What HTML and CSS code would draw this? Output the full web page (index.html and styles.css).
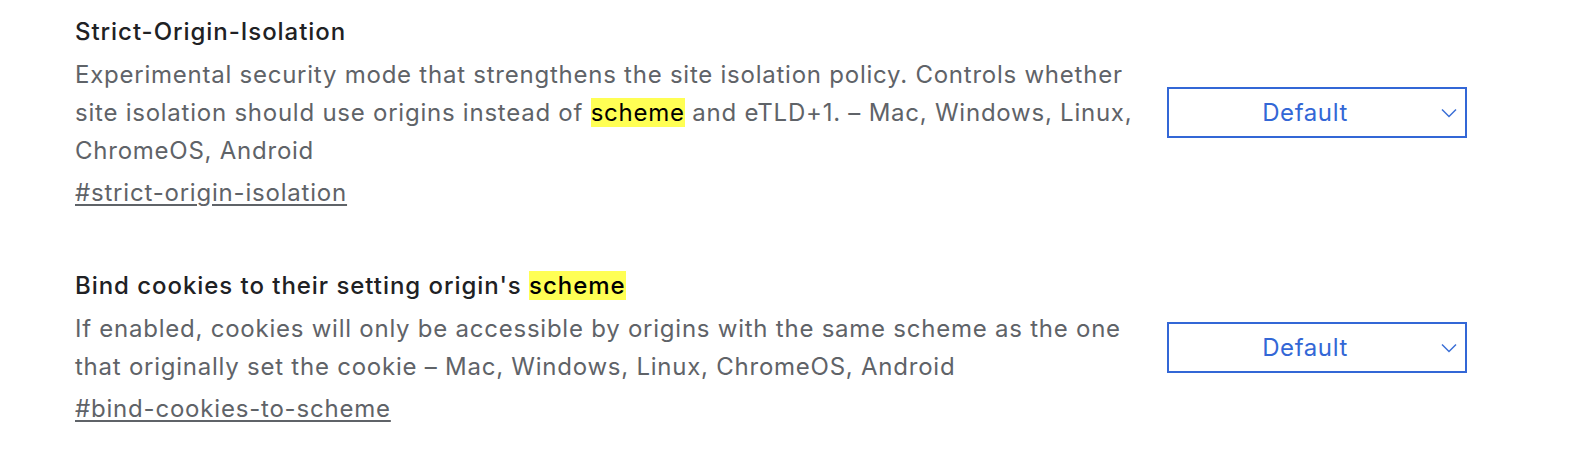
FILE: index.html
```html
<!DOCTYPE html>
<html lang="en">
<head>
<meta charset="utf-8">
<title>Experiments</title>
<link rel="stylesheet" href="styles.css">
</head>
<body>
<div class="flags">
  <div class="experiment">
    <div class="info">
      <h3 class="name">Strict-Origin-Isolation</h3>
      <p class="desc">Experimental security mode that strengthens the site isolation policy. Controls whether site isolation should use origins instead of <span class="hl">scheme</span> and eTLD+1. – Mac, Windows, Linux, ChromeOS, Android</p>
      <p class="permalink"><a href="#strict-origin-isolation">#strict-origin-isolation</a></p>
    </div>
    <div class="select"><span class="select-label">Default</span><svg class="chev" width="16" height="10" viewBox="0 0 16 10"><path d="M1 1.5 L8 8.5 L15 1.5" fill="none" stroke="#3b6fd6" stroke-width="1.5"/></svg></div>
  </div>
  <div class="experiment">
    <div class="info">
      <h3 class="name">Bind cookies to their setting origin's <span class="hl">scheme</span></h3>
      <p class="desc">If enabled, cookies will only be accessible by origins with the same scheme as the one that originally set the cookie – Mac, Windows, Linux, ChromeOS, Android</p>
      <p class="permalink"><a href="#bind-cookies-to-scheme">#bind-cookies-to-scheme</a></p>
    </div>
    <div class="select"><span class="select-label">Default</span><svg class="chev" width="16" height="10" viewBox="0 0 16 10"><path d="M1 1.5 L8 8.5 L15 1.5" fill="none" stroke="#3b6fd6" stroke-width="1.5"/></svg></div>
  </div>
</div>
</body>
</html>
```

FILE: styles.css
```css
html, body {
  margin: 0;
  padding: 0;
  background: #ffffff;
}

body {
  font-family: Inter, "Noto Sans", "Liberation Sans", sans-serif;
  font-size: 24px;
  line-height: 38px;
  color: #5f6368;
}

.flags {
  padding: 13px 0 0 75px;
  display: flex;
  flex-direction: column;
  gap: 55px;
}

.experiment {
  display: flex;
  align-items: center;
  gap: 32px;
}

.info {
  flex: 0 0 1060px;
}

.name {
  margin: 0 0 5px 0;
  font-size: 24px;
  font-weight: 500;
  line-height: 38px;
  letter-spacing: 0.95px;
  color: #202124;
}

.desc {
  margin: 0;
  letter-spacing: 0.76px;
}

.permalink {
  margin: 4px 0 0 0;
  letter-spacing: 0.8px;
}

.permalink a {
  color: #5f6368;
  text-decoration: underline;
  text-underline-offset: 3px;
}

.hl {
  background: #ffff54;
  color: #000000;
}

.select {
  box-sizing: border-box;
  width: 300px;
  height: 51px;
  border: 2px solid #3367d6;
  display: flex;
  align-items: center;
  padding-right: 8px;
  color: #3367d6;
  font-size: 24px;
  letter-spacing: 0.6px;
}

.select-label {
  flex: 1;
  text-align: center;
}

.chev {
  flex: 0 0 16px;
}
```
